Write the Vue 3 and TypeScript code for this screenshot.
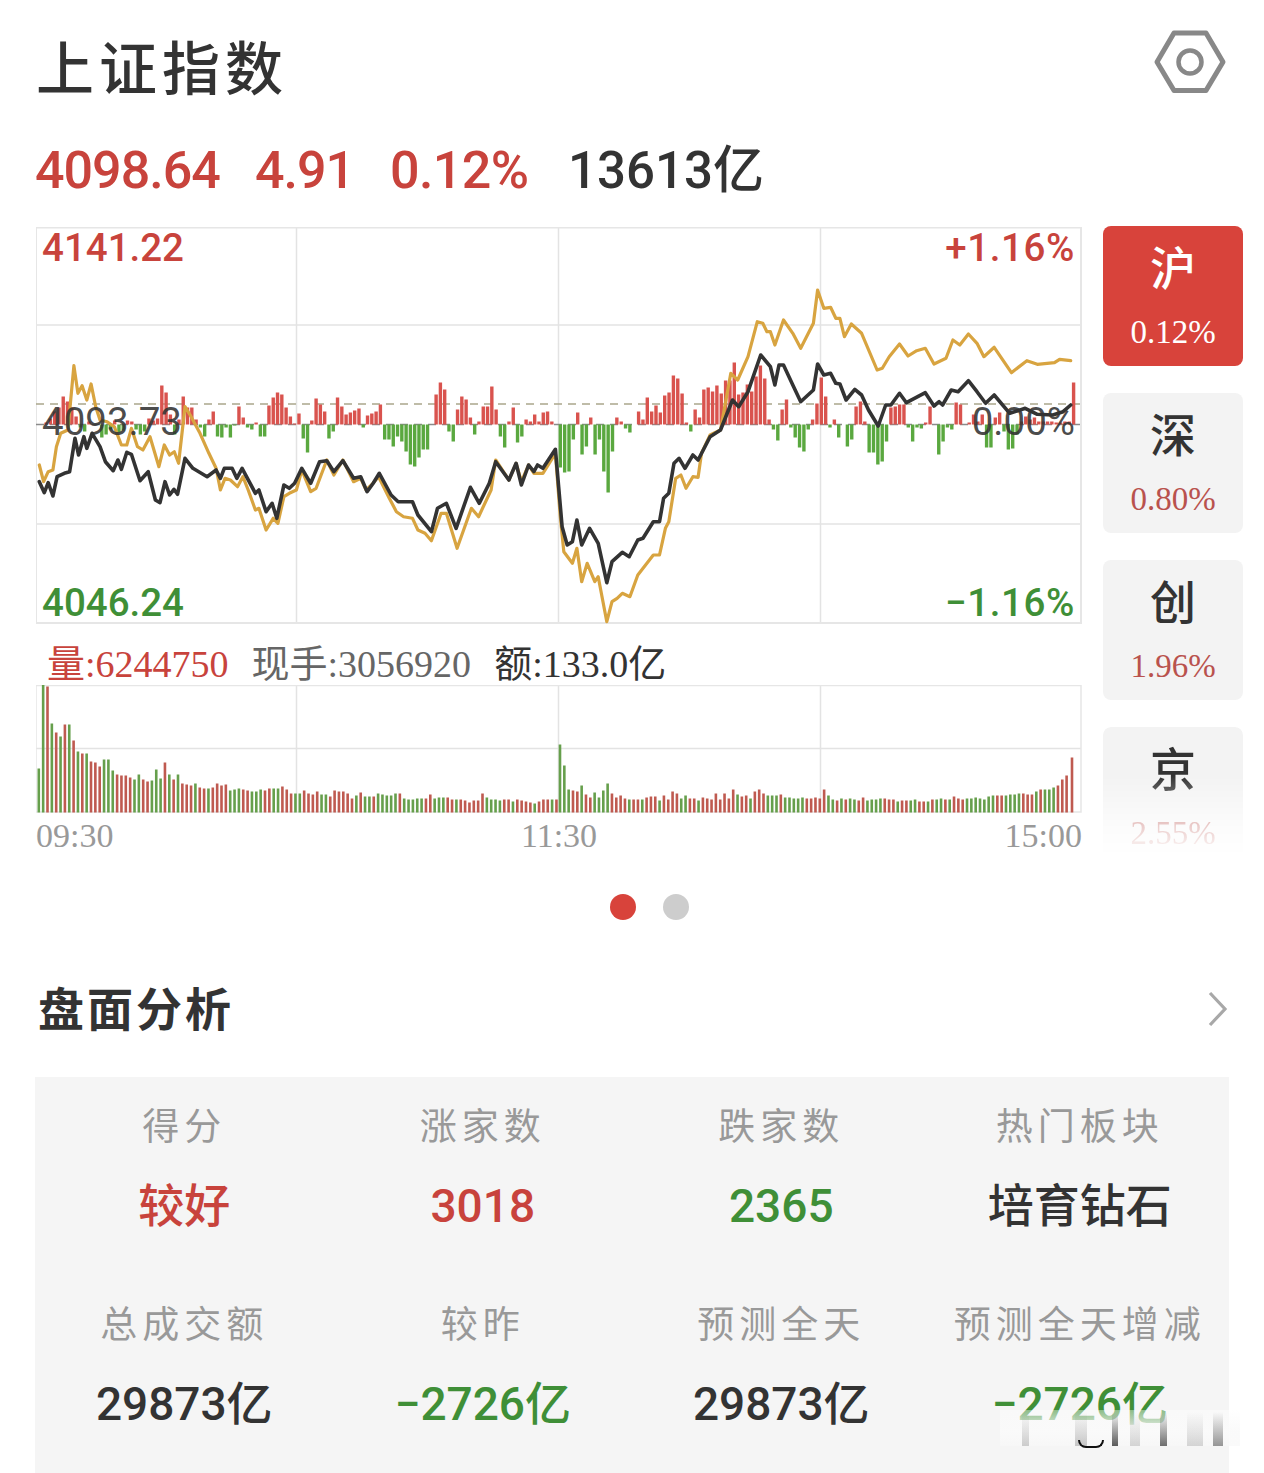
<script setup lang="ts">
type Quote = { label: string; value: string; tone: "red" | "green" | "dark" };
type Stripe = { left: number; width: number; alpha: number };

// line traces: alternating x,y read off the reference crops
const goldAm = [110,735,122,785,135,755,148,750,158,680,170,640,190,630,207,437,218,520,230,497,243,540,255,492,268,560,280,600,300,605,320,620,340,675,355,675,368,625,385,680,400,690,420,650,445,740,460,675,475,705,488,695,500,730,518,560,535,590,560,640,585,700,605,745,617,810,630,775,645,780,665,800,680,770,695,810,715,870,725,865,745,930,765,895,778,910,795,830,810,820,830,810,845,750,870,815,885,805,915,720,935,765,960,720,990,785,1010,775,1025,810,1040,795,1060,770,1090,835,1110,875,1130,890,1155,895,1170,930,1190,940,1208,962,1235,880,1250,880,1280,985,1320,865,1340,890,1375,810,1388,720,1425,780,1445,730,1460,785,1480,735,1495,760,1520,760,1555,700];
const goldPm = [30,890,40,995,65,1030,78,985,92,1085,108,1030,130,1085,140,1070,165,1205,180,1145,195,1135,210,1120,232,1130,255,1065,300,1005,318,1005,335,925,345,905,365,775,380,765,395,805,415,770,430,772,440,700,465,645,495,630,525,460,545,480,575,410,602,305,618,310,630,335,640,335,653,375,678,300,705,340,728,385,765,310,777,210,795,265,815,262,830,295,842,295,855,350,875,312,905,340,950,450,965,445,985,410,1015,372,1040,408,1065,392,1090,385,1115,432,1150,415,1170,360,1190,375,1215,342,1240,370,1260,410,1290,382,1340,458,1385,422,1415,433,1465,428,1480,418,1512,422];
const blackAm = [110,785,124,818,135,788,148,828,160,770,180,760,195,755,210,655,220,705,235,650,243,685,258,640,280,680,295,725,317,752,330,720,340,748,355,697,368,703,392,782,415,755,435,840,448,848,462,785,475,825,487,808,497,823,518,715,540,745,580,770,605,750,617,775,628,745,650,745,663,775,678,745,715,820,725,810,745,875,762,850,775,895,795,795,810,805,825,790,845,745,870,790,895,725,915,722,935,755,960,722,990,775,1010,770,1028,815,1045,790,1062,760,1095,825,1115,845,1155,845,1170,885,1208,935,1225,865,1250,850,1277,925,1317,802,1342,850,1370,790,1388,725,1425,780,1445,730,1460,795,1480,735,1495,755,1505,735,1520,745,1555,688];
const blackPm = [35,920,50,975,65,965,78,900,92,975,115,925,140,970,165,1088,180,1025,210,997,230,1010,255,960,270,955,300,905,318,905,330,835,345,820,360,730,375,715,392,745,415,705,430,720,465,650,495,630,530,540,548,560,575,515,612,405,640,440,653,495,665,435,678,435,705,495,728,545,765,510,777,432,795,465,815,460,830,490,842,492,860,540,885,508,905,525,925,570,953,618,975,555,990,555,1015,520,1035,548,1090,518,1115,558,1130,545,1140,555,1165,510,1185,515,1215,482,1240,515,1265,550,1290,525,1335,580,1380,565,1415,583,1460,585,1490,575,1512,555];

function toPoints(am: number[], pm: number[]): string {
  const out: string[] = [];
  for (let i = 0; i < am.length; i += 2) out.push(`${(am[i] / 2.8).toFixed(1)},${(220 + am[i + 1] / 3).toFixed(1)}`);
  for (let i = 0; i < pm.length; i += 2) out.push(`${(550 + pm[i] / 2.904).toFixed(1)},${(220 + pm[i + 1] / 3).toFixed(1)}`);
  return out.join(" ");
}

const goldLine = toPoints(goldAm, goldPm);
const blackLine = toPoints(blackAm, blackPm);

// money flow bars, positive goes up in red
const flowAm = [0,2,6,13,17,28,23,17,8,-3,-7,3,0,0,-13,-10,-5,4,-8,-6,4,3,-5,-10,-7,6,4,6,39,32,10,-10,5,28,17,17,5,-3,-12,5,13,-12,-13,-3,-13,-1,18,7,-3,-5,2,-12,-12,19,27,32,30,17,8,1,11,-14,-28,4,26,20,13,-14,-7,27,18,10,12,14,16,-3,9,11,13,20,-15,-15,-22,-12,-17,-27,-40,-42,-33,-25,-25,0,30,42,35,-7,-17,15,28,25,7,-10,3,18,18,38,15,-12,-23,3,17,-18,-12,5,3,10,3,12,13,3];
const flowPm = [-43,-48,-47,-15,12,-30,-22,7,-30,-15,-47,-68,-27,7,3,-4,-8,0,13,5,27,13,19,12,29,32,49,46,31,2,-7,15,7,35,37,33,39,31,44,44,62,30,32,40,33,48,59,46,5,-5,-16,15,25,-3,-13,-23,-27,-5,5,21,47,28,-3,5,-13,0,-22,-15,18,23,3,-28,-28,-40,-37,-17,17,18,20,20,-3,-17,-3,-4,2,18,0,-30,-17,-3,-5,22,20,0,2,10,3,10,-23,-23,7,12,-7,-25,-24,-10,3,8,5,7,3,3,3,3,2,2,3,3,42];

const flowBars = [
  ...flowAm.map((v, i) => ({ x: 41.8 + i * 4.286, v })),
  ...flowPm.map((v, i) => ({ x: 560.3 + i * 4.35, v })),
].filter((b) => b.v !== 0);

// volume bars, sign is only the colour
const volAm = [-44,-128,126,-89,80,-76,88,-88,72,-61,59,-59,51,50,46,-53,-53,-42,38,37,37,35,-33,-38,33,31,-32,-43,-34,50,-38,33,-38,29,28,27,-29,25,24,-24,25,29,27,28,-22,-23,-24,23,22,-21,-21,-23,22,24,-24,-24,26,23,19,-19,-19,22,19,18,21,-18,-18,16,22,21,21,19,14,-17,20,-16,-16,16,-19,-18,-17,-17,-19,19,-14,-13,-13,-14,-14,14,18,-14,-15,-15,15,13,-13,13,12,10,12,12,19,-15,-13,-13,-12,13,13,-11,13,12,11,10,-9,11,13,13,-13,13];
const volPm = [-68,-47,-23,22,21,-27,18,15,-20,-15,-22,-29,19,15,17,14,-13,13,13,-13,15,16,16,-12,17,13,21,19,-14,-17,14,14,-12,15,14,13,19,13,19,14,23,-18,16,17,-14,21,23,19,-17,-17,-17,18,-15,-15,-14,-14,-15,14,14,15,14,23,-17,-13,12,-14,13,-14,-13,12,15,-12,-13,-13,-14,14,13,13,-11,12,12,-12,-13,11,11,-11,13,-13,-14,13,-13,16,14,13,-14,-14,-15,-14,-13,-16,-17,17,17,-17,-18,-18,-19,19,18,18,-21,23,-23,-23,-25,27,33,37];

const volBars = [
  ...volAm.map((v, i) => ({ x: 38.8 + i * 4.35, v })),
  ...volPm.map((v, i) => ({ x: 560 + i * 4.33, v })),
  { x: 1072, v: 55 },
];

const quotes: Quote[] = [
  { label: "得分", value: "较好", tone: "red" },
  { label: "涨家数", value: "3018", tone: "red" },
  { label: "跌家数", value: "2365", tone: "green" },
  { label: "热门板块", value: "培育钻石", tone: "dark" },
  { label: "总成交额", value: "29873亿", tone: "dark" },
  { label: "较昨", value: "−2726亿", tone: "green" },
  { label: "预测全天", value: "29873亿", tone: "dark" },
  { label: "预测全天增减", value: "−2726亿", tone: "green" },
];

const markets = [
  { name: "沪", pct: "0.12%" },
  { name: "深", pct: "0.80%" },
  { name: "创", pct: "1.96%" },
  { name: "京", pct: "2.55%" },
];

const stripes: Stripe[] = [
  { left: 22, width: 7, alpha: 0.22 },
  { left: 75, width: 12, alpha: 0.25 },
  { left: 112, width: 6, alpha: 0.8 },
  { left: 130, width: 10, alpha: 0.18 },
  { left: 160, width: 7, alpha: 0.7 },
  { left: 187, width: 16, alpha: 0.18 },
  { left: 213, width: 10, alpha: 0.5 },
];
</script>

<template>
  <div class="page">
    <div class="header">
      <div class="title">上证指数</div>
      <svg class="gear" width="76" height="66" viewBox="1152 29 76 66">
        <polygon points="1157,62 1174,33 1206,33 1223,62 1206,90.5 1174,90.5" fill="none" stroke="#888" stroke-width="5" stroke-linejoin="round" />
        <circle cx="1190" cy="62" r="11.5" fill="none" stroke="#888" stroke-width="4.5" />
      </svg>
    </div>

    <div class="stats">
      <span class="red price">4098.64</span>
      <span class="red change">4.91</span>
      <span class="red pct">0.12%</span>
      <span class="dark amount">13613亿</span>
    </div>

    <div class="body">
      <div class="charts">
        <div class="main-chart">
          <svg width="1046" height="397" viewBox="36 227 1046 397">
            <g stroke="#e3e3e3" stroke-width="1.5">
              <line x1="36" x2="1081" y1="325" y2="325" />
              <line x1="36" x2="1081" y1="524" y2="524" />
              <line x1="296.5" x2="296.5" y1="227" y2="623" />
              <line x1="558.5" x2="558.5" y1="227" y2="623" />
              <line x1="820.5" x2="820.5" y1="227" y2="623" />
            </g>
            <rect x="36" y="227.5" width="1045" height="395.5" fill="none" stroke="#e6e6e6" stroke-width="2" />
            <line x1="36" x2="1081" y1="404" y2="404" stroke="#aaa68c" stroke-width="1.5" stroke-dasharray="8 6" />
            <line x1="36" x2="1081" y1="424.5" y2="424.5" stroke="#8b8b8b" stroke-width="1.5" stroke-dasharray="8 6" />
            <rect
              v-for="(b, i) in flowBars"
              :key="i"
              :x="b.x - 1.7"
              :y="b.v > 0 ? 424.5 - b.v : 424.5"
              width="3.4"
              :height="Math.abs(b.v)"
              :fill="b.v > 0 ? '#d9534e' : '#5aa83f'"
            />
            <polyline :points="goldLine" fill="none" stroke="#d8a440" stroke-width="3.2" stroke-linejoin="round" stroke-linecap="round" />
            <polyline :points="blackLine" fill="none" stroke="#333" stroke-width="3.6" stroke-linejoin="round" stroke-linecap="round" />
          </svg>
          <span class="tag tl red">4141.22</span>
          <span class="tag tr red">+1.16%</span>
          <span class="tag ml mid">4093.73</span>
          <span class="tag mr mid">0.00%</span>
          <span class="tag bl green">4046.24</span>
          <span class="tag br green">−1.16%</span>
        </div>

        <div class="vol-info">
          <span class="red">量:6244750</span>
          <span class="grey">现手:3056920</span>
          <span class="dark">额:133.0亿</span>
        </div>

        <svg class="vol-chart" width="1046" height="128" viewBox="36 685 1046 128">
          <g stroke="#e3e3e3" stroke-width="1.5">
            <line x1="36" x2="1081" y1="748.5" y2="748.5" />
            <line x1="296.5" x2="296.5" y1="685" y2="812" />
            <line x1="558.5" x2="558.5" y1="685" y2="812" />
            <line x1="820.5" x2="820.5" y1="685" y2="812" />
          </g>
          <rect x="36" y="685.5" width="1045" height="126.5" fill="none" stroke="#e6e6e6" stroke-width="1.5" />
          <rect
            v-for="(b, i) in volBars"
            :key="i"
            :x="b.x - 1.3"
            :y="812.5 - Math.abs(b.v)"
            width="2.6"
            :height="Math.abs(b.v)"
            :fill="b.v > 0 ? '#bf5a50' : '#669f4c'"
          />
        </svg>

        <div class="times">
          <span>09:30</span>
          <span>11:30</span>
          <span>15:00</span>
        </div>
      </div>

      <div class="side">
        <div v-for="(m, i) in markets" :key="m.name" class="market" :class="{ active: i === 0, faded: i === 3 }">
          <div class="market-name">{{ m.name }}</div>
          <div class="market-pct">{{ m.pct }}</div>
        </div>
      </div>
    </div>

    <div class="dots">
      <span class="dot on"></span>
      <span class="dot"></span>
    </div>

    <div class="section">
      <div class="section-title">盘面分析</div>
      <svg class="chevron" width="22" height="36" viewBox="0 0 22 36">
        <path d="M3 2 L18 18 L3 34" fill="none" stroke="#a8a8a8" stroke-width="3.2" />
      </svg>
    </div>

    <div class="panel">
      <div class="grid">
        <div v-for="(q, i) in quotes" :key="i" class="cell">
          <div class="cell-label">{{ q.label }}</div>
          <div class="cell-value" :class="q.tone">{{ q.value }}</div>
        </div>
      </div>
      <div class="watermark">
        <span
          v-for="s in stripes"
          :key="s.left"
          class="stripe"
          :style="{ left: s.left + 'px', width: s.width + 'px', opacity: s.alpha }"
        ></span>
        <span class="smile"></span>
      </div>
    </div>
  </div>
</template>

<style scoped>
.page {
  position: relative;
  width: 1264px;
  height: 1473px;
  overflow: hidden;
  background: #fff;
  color: #333;
  font-family: Roboto, "Noto Sans CJK SC", sans-serif;
}

.red {
  color: #c8433c;
}

.green {
  color: #3f8f37;
}

.dark {
  color: #333;
}

.grey {
  color: #666;
}

.header {
  display: flex;
  align-items: center;
  justify-content: space-between;
  height: 134px;
  padding: 0 36px 0 36px;
  box-sizing: border-box;
}

.title {
  margin-top: -4px;
  font-family: "Noto Sans CJK SC", sans-serif;
  font-size: 58px;
  font-weight: 500;
  letter-spacing: 5px;
  line-height: 60px;
}

.gear {
  margin-top: -10px;
}

.stats {
  display: flex;
  align-items: center;
  height: 74px;
  padding-left: 35px;
  font-size: 52px;
  font-weight: 500;
  line-height: 60px;
  white-space: nowrap;
}

.price {
  width: 220px;
  letter-spacing: -1px;
}

.change {
  width: 135px;
  letter-spacing: -1px;
}

.pct {
  width: 178px;
  letter-spacing: -0.6px;
}

.amount {
  font-weight: 500;
  font-size: 51px;
  letter-spacing: 0;
}

.body {
  display: flex;
  height: 641px;
  margin-top: 18px;
}

.charts {
  width: 1046px;
  margin: 1px 0 0 36px;
}

.main-chart {
  position: relative;
  height: 397px;
}

.main-chart svg,
.vol-chart {
  display: block;
}

.tag {
  position: absolute;
  font-size: 38.5px;
  font-weight: 500;
  line-height: 40px;
  white-space: nowrap;
}

.tl {
  left: 6px;
  top: 1px;
}

.tr {
  right: 7px;
  top: 1px;
  letter-spacing: 0.6px;
}

.ml {
  left: 6px;
  top: 175px;
  font-weight: 400;
}

.mr {
  right: 7px;
  top: 175px;
  font-weight: 400;
}

.bl {
  left: 6px;
  top: 356px;
}

.br {
  right: 7px;
  top: 356px;
  letter-spacing: 0.6px;
}

.mid {
  color: rgba(51, 51, 51, 0.88);
}

.vol-info {
  display: flex;
  align-items: center;
  gap: 23px;
  height: 61px;
  padding-left: 11px;
  padding-top: 12px;
  box-sizing: border-box;
  font-family: "Liberation Serif", "Noto Sans CJK SC", serif;
  font-size: 38px;
  white-space: nowrap;
}

.times {
  display: flex;
  justify-content: space-between;
  margin-top: 3px;
  font-family: "Liberation Serif", serif;
  font-size: 34px;
  line-height: 40px;
  color: #999;
}

.side {
  display: flex;
  flex-direction: column;
  gap: 27px;
  width: 140px;
  margin-left: 21px;
}

.market {
  flex: none;
  height: 140px;
  border-radius: 8px;
  background: #f3f3f3;
  text-align: center;
}

.market.active {
  background: #d8433b;
}

.market.faded {
  -webkit-mask-image: linear-gradient(#000 35%, rgba(0, 0, 0, 0.3) 70%, transparent 92%);
  mask-image: linear-gradient(#000 35%, rgba(0, 0, 0, 0.3) 70%, transparent 92%);
}

.market-name {
  padding-top: 13px;
  font-family: "Noto Sans CJK SC", sans-serif;
  font-size: 46px;
  font-weight: 500;
  line-height: 52px;
  color: #333;
}

.market-pct {
  margin-top: 21px;
  font-family: "Liberation Serif", serif;
  font-size: 33px;
  line-height: 40px;
  color: #b9524d;
}

.active .market-name,
.active .market-pct {
  color: #fff;
}

.dots {
  display: flex;
  justify-content: center;
  gap: 27px;
  margin-top: 27px;
  padding-left: 35px;
}

.dot {
  width: 26px;
  height: 26px;
  border-radius: 50%;
  background: #cdcdcd;
}

.dot.on {
  background: #d8433b;
}

.section {
  display: flex;
  align-items: center;
  justify-content: space-between;
  height: 60px;
  margin-top: 59px;
  padding: 0 35px 0 38px;
}

.section-title {
  margin-top: -6px;
  font-family: "Noto Sans CJK SC", sans-serif;
  font-size: 46px;
  font-weight: 700;
  letter-spacing: 3px;
  line-height: 60px;
}

.panel {
  position: relative;
  width: 1194px;
  height: 396px;
  margin: 38px 0 0 35px;
  background: #f5f5f5;
}

.grid {
  display: grid;
  grid-template-columns: repeat(4, 1fr);
  grid-auto-rows: 198px;
}

.cell {
  padding-top: 22px;
  text-align: center;
}

.cell-label {
  font-family: "Noto Sans CJK SC", sans-serif;
  font-size: 37px;
  letter-spacing: 5px;
  line-height: 50px;
  color: #999;
}

.cell-value {
  margin-top: 29px;
  font-size: 46px;
  font-weight: 500;
  line-height: 56px;
  white-space: nowrap;
}

.watermark {
  position: absolute;
  left: 965px;
  top: 333px;
  width: 240px;
  height: 36px;
  background: linear-gradient(rgba(255, 255, 255, 0.4), rgba(250, 250, 250, 0.97) 60%, rgba(248, 248, 248, 0.7));
}

.stripe {
  position: absolute;
  top: 2px;
  bottom: 0;
  background: linear-gradient(rgba(60, 60, 60, 0), #333);
}

.smile {
  position: absolute;
  left: 78px;
  bottom: -2px;
  width: 26px;
  height: 8px;
  box-sizing: border-box;
  border: 2px solid #111;
  border-top: none;
  border-radius: 0 0 10px 10px;
}
</style>
